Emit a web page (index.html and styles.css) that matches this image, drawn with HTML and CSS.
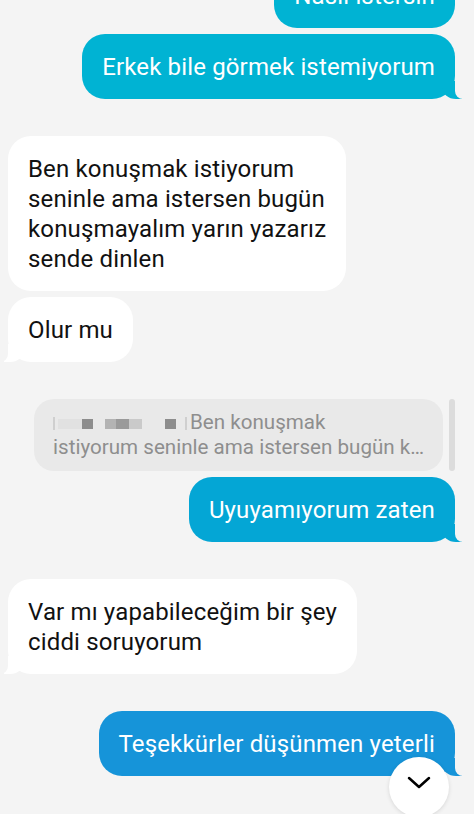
FILE: index.html
```html
<!DOCTYPE html>
<html lang="tr">
<head>
    <meta charset="UTF-8">
    <meta name="viewport" content="width=device-width, initial-scale=1.0">
    <title>Sohbet</title>
    <link rel="stylesheet" href="styles.css">
</head>
<body>
    <div class="thread">
        <div class="row row-out row-first">
            <div class="bubble bubble-out tone-1">Nasıl istersin</div>
        </div>
        <div class="row row-out row-tight">
            <div class="bubble bubble-out tone-1 tail">Erkek bile görmek istemiyorum</div>
        </div>

        <div class="row row-in">
            <div class="bubble bubble-in">Ben konuşmak istiyorum<br>seninle ama istersen bugün<br>konuşmayalım yarın yazarız<br>sende dinlen</div>
        </div>
        <div class="row row-in row-tight">
            <div class="bubble bubble-in tail">Olur mu</div>
        </div>

        <div class="row row-out row-quote">
            <div class="quote">
                <span class="quote-name">
                    <i class="px px-line"></i><i class="px px-l1"></i><i class="px px-d"></i><i class="px px-gap"></i><i class="px px-m"></i><i class="px px-d2"></i><i class="px px-l2"></i><i class="px px-gap2"></i><i class="px px-d"></i><i class="px px-gap3"></i><i class="px px-line"></i>
                </span>Ben konuşmak<br>istiyorum seninle ama istersen bugün k…
            </div>
            <div class="quote-bar"></div>
        </div>
        <div class="row row-out row-tight">
            <div class="bubble bubble-out tone-2 tail">Uyuyamıyorum zaten</div>
        </div>

        <div class="row row-in">
            <div class="bubble bubble-in tail">Var mı yapabileceğim bir şey<br>ciddi soruyorum</div>
        </div>

        <div class="row row-out">
            <div class="bubble bubble-out tone-3 tail">Teşekkürler düşünmen yeterli</div>
        </div>
    </div>

    <button class="scroll-down" aria-label="En alta git">
        <svg viewBox="0 0 24 24" width="24" height="24" fill="none" stroke="#000" stroke-width="2.5" stroke-linecap="round" stroke-linejoin="round">
            <path d="M2 7l10 9 10-9"></path>
        </svg>
    </button>
</body>
</html>
```

FILE: styles.css
```css
body {
    margin: 0;
    padding: 0;
    background-color: #f4f4f4;
    font-family: Roboto, "Noto Sans", sans-serif;
    color: #111;
    overflow: hidden;
    height: 814px;
    position: relative;
}

.thread {
    display: flex;
    flex-direction: column;
    padding: 0 19px 0 8px;
}

.row {
    display: flex;
    margin-top: 37px;
}

.row-first {
    margin-top: -37px;
}

.row-tight {
    margin-top: 6px;
}

.row-out {
    justify-content: flex-end;
}

.row-in {
    justify-content: flex-start;
}

.bubble {
    position: relative;
    padding: 18px 20px 17px;
    font-size: 24px;
    line-height: 30px;
    letter-spacing: 0.15px;
    border-radius: 23px;
}

.bubble-in {
    background-color: #fff;
    color: #111;
}

.bubble-out {
    color: #fff;
}

.tone-1 {
    background-color: #00b3d3;
}

.tone-2 {
    background-color: #04a6d5;
}

.tone-3 {
    background-color: #1694d9;
}

/* little curled tail on the last bubble of a group */
.tail::before,
.tail::after {
    content: "";
    position: absolute;
    bottom: 0;
    height: 18px;
}

.bubble-out.tail::before {
    right: -7px;
    width: 20px;
    background: inherit;
    border-bottom-left-radius: 14px 12px;
}

.bubble-out.tail::after {
    right: -24px;
    width: 24px;
    background-color: #f4f4f4;
    border-bottom-left-radius: 8px;
}

.bubble-in.tail::before {
    left: -4px;
    width: 20px;
    background: inherit;
    border-bottom-right-radius: 14px 12px;
}

.bubble-in.tail::after {
    left: -24px;
    width: 24px;
    background-color: #f4f4f4;
    border-bottom-right-radius: 8px;
}

.row-quote {
    gap: 6px;
    align-items: stretch;
}

.quote {
    background-color: #e9e9e9;
    color: #8e8e8e;
    font-size: 20.6px;
    line-height: 25px;
    padding: 11px 19px;
    border-radius: 20px;
}

.quote-name {
    display: inline-flex;
    align-items: center;
    height: 14px;
    vertical-align: -1px;
    filter: blur(0.6px);
}

.px {
    display: inline-block;
    height: 10px;
}

.px-line {
    width: 2px;
    height: 13px;
    background-color: #cfcfcf;
    margin-right: 3px;
}

.px-l1 {
    width: 24px;
    background-color: #e1e1e1;
}

.px-d {
    width: 11px;
    background-color: #8d8d8d;
}

.px-gap {
    width: 12px;
}

.px-m {
    width: 11px;
    background-color: #b3b3b3;
}

.px-d2 {
    width: 13px;
    background-color: #9a9a9a;
}

.px-l2 {
    width: 13px;
    background-color: #cacaca;
}

.px-gap2 {
    width: 23px;
}

.px-gap3 {
    width: 9px;
}

.quote-bar {
    width: 6px;
    border-radius: 3px;
    background-color: #dcdcdc;
}

.scroll-down {
    position: absolute;
    left: 389px;
    top: 757px;
    width: 60px;
    height: 60px;
    border: none;
    border-radius: 50%;
    background-color: #fff;
    box-shadow: 0 1px 4px rgba(0, 0, 0, 0.12);
    display: flex;
    align-items: center;
    justify-content: center;
    padding: 0 0 8px;
}
```
